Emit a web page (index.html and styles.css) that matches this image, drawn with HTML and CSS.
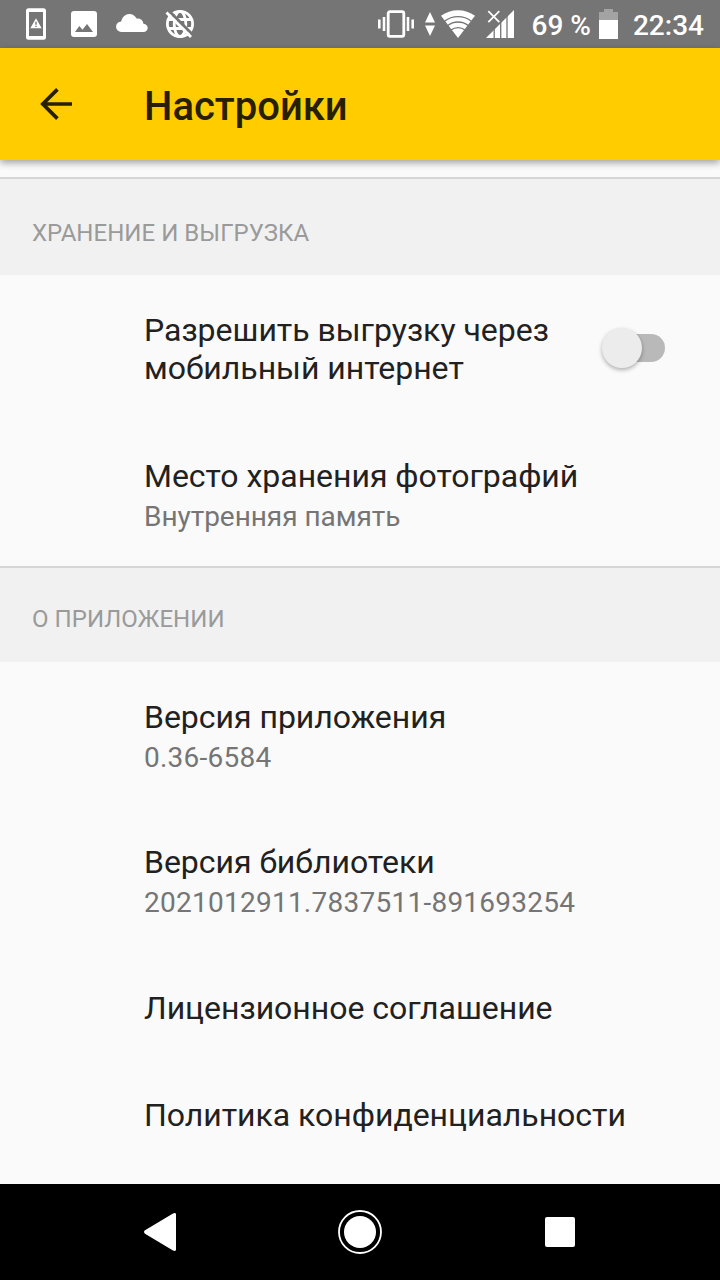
FILE: index.html
```html
<!DOCTYPE html>
<html lang="ru">
<head>
<meta charset="utf-8">
<title>Настройки</title>
<link rel="stylesheet" href="styles.css">
</head>
<body>
<div class="screen">
  <div class="statusbar">
    <div class="status-left">
      <svg width="20" height="32" viewBox="0 0 20 32"><path fill="#fff" fill-rule="evenodd" d="M2.500 .3h15a2.500 2.500 0 0 1 2.500 2.500v26.400a2.500 2.500 0 0 1-2.500 2.500h-15a2.500 2.500 0 0 1-2.500-2.500v-26.400a2.500 2.500 0 0 1 2.500-2.500zM3 4v24h14v-24zM10 10.300l5.700 9.900h-11.400zM9.300 13.700v3h1.400v-3zM9.300 17.700v1.300h1.400v-1.300z"/></svg>
      <svg class="icon-image" width="26" height="26" viewBox="0 0 26 26"><path fill="#fff" fill-rule="evenodd" d="M3 0h20a3 3 0 0 1 3 3v20a3 3 0 0 1-3 3h-20a3 3 0 0 1-3-3v-20a3 3 0 0 1 3-3zM4 21h18l-6-8-4.500 5.800-3.200-3.900z"/></svg>
      <svg class="icon-cloud" width="32" height="18" viewBox="0 0 32 18"><path fill="#fff" d="M5.500 18a5.300 5.300 0 0 1-.3-10.600c1.200-4.600 4.300-7.400 8-7.400 3.300 0 6 2 7.400 4.600 3.400-.5 6.300 1.400 6.900 5.100 2.700.3 4.200 2 4.200 4.400 0 2.400-1.800 3.900-4.200 3.900z"/></svg>
      <svg class="icon-globe" width="30" height="30" viewBox="0 0 30 30"><g fill="none" stroke="#fff" stroke-width="2.800"><circle cx="15" cy="15" r="12.600"/><ellipse cx="15" cy="15" rx="5.800" ry="12.600"/><path d="M3.500 10.500h23M3.500 19.500h23"/></g><path d="M3 1l25 25" stroke="#757575" stroke-width="3"/><path d="M1.500 3.500l24.500 24.500" stroke="#fff" stroke-width="2.800"/></svg>
    </div>
    <div class="status-right">
      <svg class="icon-vibrate" width="36" height="28" viewBox="0 0 36 28"><rect x="10.200" y="1.700" width="15.600" height="24.600" rx="1.800" fill="none" stroke="#fff" stroke-width="2.800"/><path fill="#fff" d="M0 9.500h2.600v9h-2.600zM4.700 7h2.600v14h-2.600zM28.700 7h2.600v14h-2.600zM33.400 9.500h2.600v9h-2.600z"/></svg>
      <svg class="icon-traffic" width="10" height="24" viewBox="0 0 10 24"><path fill="#fff" d="M5 0l5 10.500h-10zM0 13.500h10l-5 10.500z"/></svg>
      <svg class="icon-wifi" width="34" height="28" viewBox="0 0 34 28"><path fill="#fff" d="M17 28l-17-22.200a28.400 28.400 0 0 1 34 0z"/><g fill="none" stroke="#757575" stroke-width="1.400"><path d="M3.500 11.300a22 22 0 0 1 27 0M6.500 15.700a17 17 0 0 1 21 0M10 20a11.500 11.500 0 0 1 14 0"/></g></svg>
      <svg class="icon-signal" width="30" height="28" viewBox="0 0 30 28"><path fill="#fff" d="M0 28l28-28v28z"/><path d="M8.200 15v13M14.700 10v18M21 5v23" stroke="#757575" stroke-width="1.300"/><path d="M2.300 1.200l11 11M13.300 1.200l-11 11" stroke="#757575" stroke-width="4"/><path d="M2.300 1.200l11 11M13.300 1.200l-11 11" stroke="#fff" stroke-width="1.800"/></svg>
      <span class="battery-level">69 %</span>
      <svg class="icon-battery" width="19" height="30" viewBox="0 0 19 30"><path fill="#a3a3a3" d="M5 0h9v3h5v8h-19v-8h5z"/><path fill="#fff" d="M0 11h19v19h-19z"/></svg>
      <span class="clock">22:34</span>
    </div>
  </div>
  <header class="toolbar">
    <svg width="32" height="32" viewBox="0 0 32 32"><path d="M32 16h-29M17.400 1.400l-14.600 14.600 14.600 14.600" fill="none" stroke="#261f00" stroke-width="3.700"/></svg>
    <h1 class="title">Настройки</h1>
  </header>
  <main class="content">
    <h2 class="section">ХРАНЕНИЕ И ВЫГРУЗКА</h2>
    <div class="row row-switch">
      <div class="label">Разрешить выгрузку через<br>мобильный интернет</div>
      <div class="switch"><div class="thumb"></div></div>
    </div>
    <div class="row row-last">
      <div><div class="label">Место хранения фотографий</div><div class="summary">Внутренняя память</div></div>
    </div>
    <h2 class="section section-about">О ПРИЛОЖЕНИИ</h2>
    <div class="row">
      <div><div class="label">Версия приложения</div><div class="summary summary-number">0.36-6584</div></div>
    </div>
    <div class="row row-library">
      <div><div class="label">Версия библиотеки</div><div class="summary summary-number">2021012911.7837511-891693254</div></div>
    </div>
    <div class="row row-single"><div class="label">Лицензионное соглашение</div></div>
    <div class="row row-single"><div class="label">Политика конфиденциальности</div></div>
  </main>
  <nav class="navbar">
    <svg width="32" height="38" viewBox="0 0 32 38"><path fill="#fff" d="M1 17.300l28-16.800q3-1.300 3 1v35q0 2.300-3 1l-28-16.800q-2-1.700 0-3.400z"/></svg>
    <svg width="44" height="44" viewBox="0 0 44 44"><circle cx="22" cy="22" r="21" fill="none" stroke="#fff" stroke-width="1.800"/><circle cx="22" cy="22" r="16" fill="#fff"/></svg>
    <svg width="32" height="30" viewBox="0 0 32 30"><rect x="1" width="30" height="30" rx="2" fill="#fff"/></svg>
  </nav>
</div>
</body>
</html>
```

FILE: styles.css
```css
body {
  margin: 0;
  font-family: Roboto, "Noto Sans", sans-serif;
}

svg {
  display: block;
  flex: none;
}

.screen {
  display: flex;
  flex-direction: column;
  width: 720px;
  height: 1280px;
  overflow: hidden;
  background: #fafafa;
}

.statusbar {
  display: flex;
  justify-content: space-between;
  flex: none;
  height: 48px;
  background: #757575;
  color: #fff;
}

.status-left,
.status-right {
  display: flex;
  align-items: center;
}

.status-left {
  padding-left: 26px;
}

.icon-image {
  margin-left: 25px;
}

.icon-cloud {
  margin: 0 17px 2px 19px;
}

.status-right {
  padding-right: 16px;
  font-size: 28px;
  font-weight: 500;
  line-height: 48px;
  white-space: nowrap;
}

.icon-vibrate {
  margin-right: 11px;
}

.icon-traffic {
  margin-right: 6px;
}

.icon-signal {
  margin: 0 16px 0 11px;
}

.battery-level {
  margin-top: 3px;
}

.icon-battery {
  margin: 0 15px 0 8px;
}

.clock {
  margin-top: 3px;
}

.toolbar {
  display: flex;
  align-items: center;
  gap: 72px;
  flex: none;
  z-index: 1;
  height: 112px;
  padding-left: 40px;
  background: #ffcc00;
  box-shadow: 0 3px 7px rgba(0, 0, 0, 0.35);
}

.title {
  margin: 5px 0 0;
  color: #261f00;
  font-size: 40px;
  font-weight: 500;
  line-height: 48px;
}

.content {
  flex: 1;
  padding-top: 17px;
}

.section {
  box-sizing: border-box;
  height: 98px;
  margin: 0;
  padding: 11px 32px 0;
  border-top: 2px solid #d6d6d6;
  background: #f1f1f1;
  color: #9a9a9a;
  font-size: 24px;
  font-weight: 400;
  line-height: 86px;
  letter-spacing: 0.04px;
}

.section-about {
  height: 96px;
  padding-top: 8px;
}

.row {
  display: flex;
  align-items: center;
  justify-content: space-between;
  box-sizing: border-box;
  height: 146px;
  padding: 2px 54px 0 144px;
}

.row-switch {
  padding-right: 55px;
}

.row-last {
  height: 145px;
  padding-top: 3px;
}

.row-library {
  padding-top: 1px;
}

.row-single {
  height: 107px;
  padding-top: 0;
}

.label {
  color: #212121;
  font-size: 32px;
  line-height: 38px;
  letter-spacing: -0.02px;
}

.summary {
  margin-top: 5px;
  color: #757575;
  font-size: 28px;
  line-height: 34px;
  letter-spacing: -0.04px;
}

.summary-number {
  letter-spacing: 0.25px;
}

.switch {
  display: flex;
  align-items: center;
  width: 56px;
  height: 28px;
  margin-bottom: 2px;
  border-radius: 14px;
  background: #b9b9b9;
}

.thumb {
  flex: none;
  width: 40px;
  height: 40px;
  margin-left: -7px;
  border-radius: 50%;
  background: #ececec;
  box-shadow: 0 2px 4px rgba(0, 0, 0, 0.3);
}

.navbar {
  display: flex;
  align-items: center;
  justify-content: space-between;
  flex: none;
  height: 96px;
  padding: 0 144px;
  background: #000;
}
```
